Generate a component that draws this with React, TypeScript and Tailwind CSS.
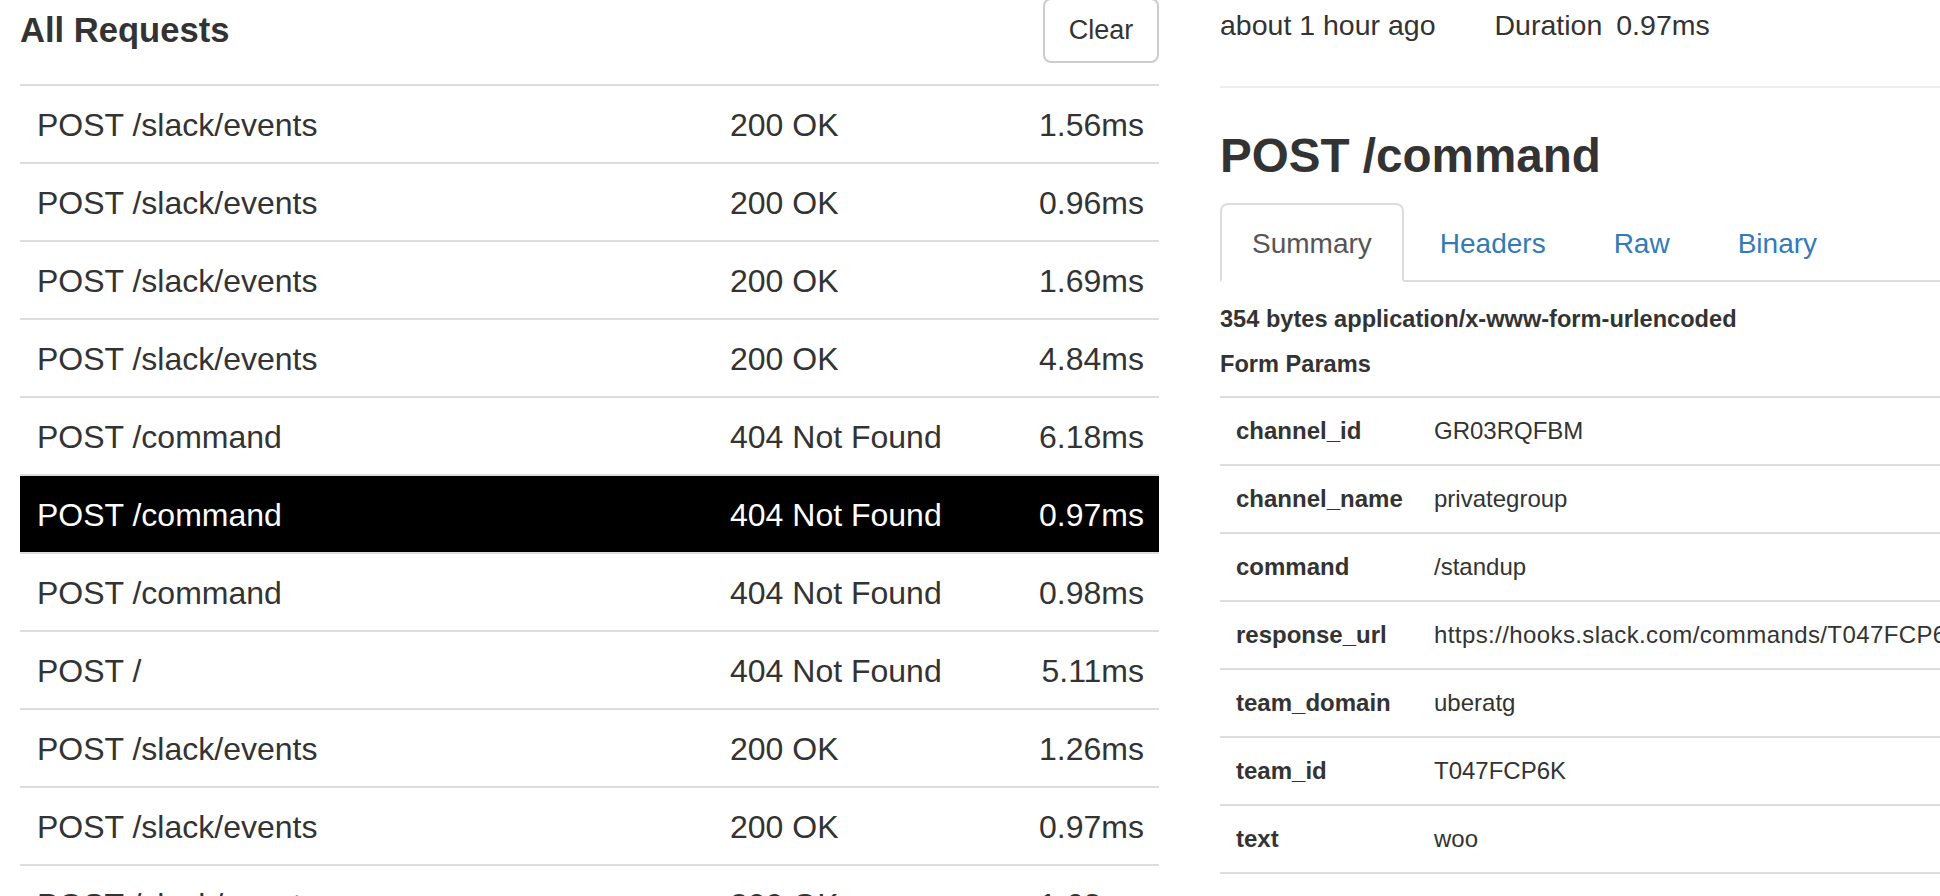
import React from 'react';

type Req = { path: string; status: string; ms: string };

const requests: Req[] = [
  { path: 'POST /slack/events', status: '200 OK', ms: '1.56ms' },
  { path: 'POST /slack/events', status: '200 OK', ms: '0.96ms' },
  { path: 'POST /slack/events', status: '200 OK', ms: '1.69ms' },
  { path: 'POST /slack/events', status: '200 OK', ms: '4.84ms' },
  { path: 'POST /command', status: '404 Not Found', ms: '6.18ms' },
  { path: 'POST /command', status: '404 Not Found', ms: '0.97ms' },
  { path: 'POST /command', status: '404 Not Found', ms: '0.98ms' },
  { path: 'POST /', status: '404 Not Found', ms: '5.11ms' },
  { path: 'POST /slack/events', status: '200 OK', ms: '1.26ms' },
  { path: 'POST /slack/events', status: '200 OK', ms: '0.97ms' },
  { path: 'POST /slack/events', status: '200 OK', ms: '1.63ms' },
];

const params = [
  ['channel_id', 'GR03RQFBM'],
  ['channel_name', 'privategroup'],
  ['command', '/standup'],
  ['response_url', 'https://hooks.slack.com/commands/T047FCP6K/578391024561/xYz3Kq9LpR2mT8vN'],
  ['team_domain', 'uberatg'],
  ['team_id', 'T047FCP6K'],
  ['text', 'woo'],
];

const tabs = ['Summary', 'Headers', 'Raw', 'Binary'];

export default function App() {
  const selected = 5;

  return (
    <div className="flex w-[1940px] h-[896px] overflow-hidden bg-white text-[#333] font-['Liberation_Sans',Arial,sans-serif]">
      {/* Request list */}
      <div className="ml-[20px] w-[1139px] shrink-0">
        <div className="flex h-[84px] items-start justify-between">
          <h3 className="mt-[10px] text-[34.6px] leading-[40px] font-bold">All Requests</h3>
          <button className="-mt-[2px] flex h-[65px] w-[116px] items-center justify-center rounded-[8px] border-2 border-[#ccc] bg-white text-[27px] text-[#333]">
            Clear
          </button>
        </div>
        {requests.map((r, i) => (
          <div
            key={i}
            className={`grid h-[78px] grid-cols-[693px_1fr_auto] items-center border-t-2 border-[#ddd] pl-[17px] pr-[15px] pt-[2px] text-[32px] leading-[36px] ${
              i === selected ? 'bg-black text-white' : ''
            }`}
          >
            <span>{r.path}</span>
            <span>{r.status}</span>
            <span className="text-right">{r.ms}</span>
          </div>
        ))}
      </div>

      {/* Request detail */}
      <div className="ml-[61px] w-[1000px] shrink-0">
        <div className="flex h-[88px] border-b-2 border-[#eee] pt-[9px] text-[28.5px] leading-[32px]">
          <span>about 1 hour ago</span>
          <span className="ml-[59px]">Duration</span>
          <span className="ml-[14px]">0.97ms</span>
        </div>

        <h1 className="mt-[42px] text-[47.6px] leading-[52px] font-bold">POST /command</h1>

        <div className="mt-[21px] flex border-b-2 border-[#ddd]">
          {tabs.map((t, i) => (
            <div
              key={t}
              className={`-mb-[2px] mr-[4px] flex h-[79px] items-center rounded-t-[8px] border-2 px-[30px] pt-[2px] text-[28px] leading-[32px] ${
                i === 0
                  ? 'border-[#ddd] border-b-transparent bg-white text-[#555]'
                  : 'border-transparent text-[#337ab7]'
              }`}
            >
              {t}
            </div>
          ))}
        </div>

        <div className="mt-[23px] text-[23.6px] leading-[28px] font-bold">354 bytes application/x-www-form-urlencoded</div>
        <div className="mt-[17px] text-[23.6px] leading-[28px] font-bold">Form Params</div>

        <div className="mt-[18px] border-b-2 border-[#ddd]">
          {params.map(([k, v]) => (
            <div key={k} className="grid h-[68px] grid-cols-[214px_1fr] items-center border-t-2 border-[#ddd] text-[24px] leading-[28px]">
              <span className="pl-[16px] font-bold">{k}</span>
              <span className={`whitespace-nowrap ${k === 'response_url' ? 'tracking-[0.4px]' : ''}`}>{v}</span>
            </div>
          ))}
        </div>
      </div>
    </div>
  );
}
